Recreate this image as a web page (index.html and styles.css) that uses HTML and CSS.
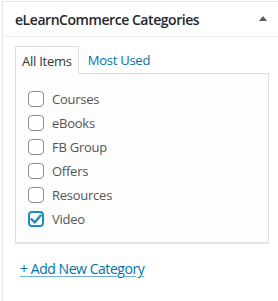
FILE: index.html
```html
<!DOCTYPE html>
<html lang="en">

<head>
    <meta charset="UTF-8" />
    <meta name="viewport" content="width=device-width, initial-scale=1.0" />
    <title>eLearnCommerce Categories</title>
    <link rel="stylesheet" href="styles.css">
</head>

<body>
    <div class="postbox">
        <div class="postbox-header">
            <h2>eLearnCommerce Categories</h2>
            <span class="toggle-arrow"></span>
        </div>

        <div class="inside">
            <ul class="category-tabs">
                <li class="tab active">All Items</li>
                <li class="tab"><a href="#">Most Used</a></li>
            </ul>

            <div class="tabs-panel">
                <ul class="checklist">
                    <li><span class="check"></span>Courses</li>
                    <li><span class="check"></span>eBooks</li>
                    <li><span class="check"></span>FB Group</li>
                    <li><span class="check"></span>Offers</li>
                    <li><span class="check"></span>Resources</li>
                    <li>
                        <span class="check checked">
                            <svg viewBox="0 0 16 16" width="16" height="16">
                                <path d="M3.4 8.2 L6.8 11.4 L12.6 4.4" fill="none" stroke="#1e8cbe" stroke-width="2.4"
                                    stroke-linecap="round" stroke-linejoin="round" />
                            </svg>
                        </span>Video
                    </li>
                </ul>
            </div>

            <a class="add-new" href="#">+ Add New Category</a>
        </div>
    </div>
</body>

</html>
```

FILE: styles.css
```css
* {
    margin: 0;
    padding: 0;
    box-sizing: border-box;
}

body {
    font-family: 'Open Sans', 'Noto Sans', sans-serif;
    background: #fff;
    color: #555;
    font-size: 13px;
    letter-spacing: -0.25px;
}

.postbox {
    margin: 1px 0 0 2px;
    border-top: 1px solid #e5e5e5;
    border-left: 1px solid #e5e5e5;
    background: #fff;
    height: 300px;
}

.postbox-header {
    display: flex;
    justify-content: space-between;
    align-items: center;
    height: 35px;
    padding: 0 11px 0 12px;
    border-bottom: 1px solid #eee;
}

.postbox-header h2 {
    font-size: 14px;
    font-weight: 600;
    color: #23282d;
    letter-spacing: -0.45px;
}

.toggle-arrow {
    width: 0;
    height: 0;
    border-left: 4px solid transparent;
    border-right: 4px solid transparent;
    border-bottom: 5px solid #555d66;
    margin-top: -1px;
}

.inside {
    padding: 9px 9px 0 12px;
}

.category-tabs {
    list-style: none;
    display: flex;
    align-items: flex-end;
}

.tab {
    height: 28px;
    display: flex;
    align-items: center;
    padding: 0 6px;
    margin-bottom: -1px;
}

.tab.active {
    border: 1px solid #ddd;
    border-bottom: none;
    background: #fdfdfd;
    color: #32373c;
}

.tab a {
    color: #0073aa;
    text-decoration: none;
    padding-left: 3px;
}

.tabs-panel {
    border: 1px solid #ddd;
    border-bottom-width: 2px;
    border-bottom-color: #e5e5e5;
    background: #fdfdfd;
    padding: 13px 12px 11px;
}

.checklist {
    list-style: none;
}

.checklist li {
    display: flex;
    align-items: center;
    height: 24px;
    color: #555;
}

.check {
    width: 16px;
    height: 16px;
    border: 1px solid #8c8f94;
    border-radius: 4px;
    background: #fff;
    margin-right: 8px;
    display: flex;
    align-items: center;
    justify-content: center;
}

.check.checked {
    border: 2px solid #1e8cbe;
}

.check.checked svg {
    flex: none;
}

.add-new {
    display: inline-block;
    margin: 15px 0 0 5px;
    color: #0073aa;
    text-decoration: underline;
    text-decoration-color: #6fb1d3;
    text-underline-offset: 2px;
    font-size: 14px;
    letter-spacing: -0.45px;
}
```
